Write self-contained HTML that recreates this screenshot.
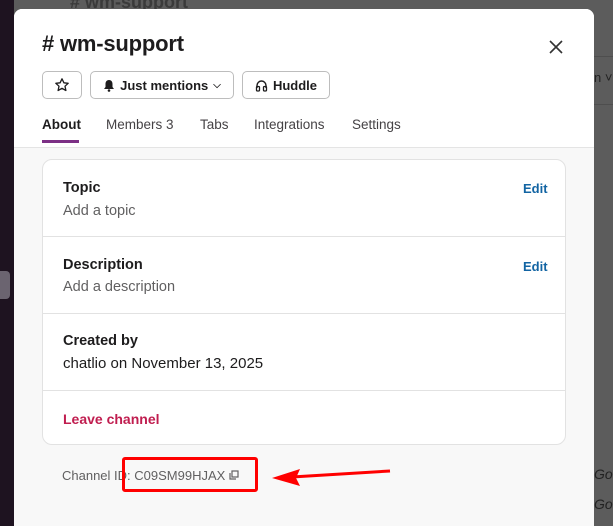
<!DOCTYPE html>
<html><head><style>
*{box-sizing:border-box;margin:0;padding:0}
html,body{width:613px;height:526px;overflow:hidden}
body{background:#5c5c5c;font-family:"Liberation Sans",sans-serif;position:relative;color:#1d1c1d}
.left{position:absolute;left:0;top:0;width:14px;height:526px;background:#1e1320}
.lb{position:absolute;left:0;top:271px;width:10px;height:28px;background:#6b6470;border-radius:0 4px 4px 0}
.modal{position:absolute;left:14px;top:9px;width:580px;height:517px;background:#f8f8f8;border-radius:8px 8px 0 0;overflow:hidden}
.head{background:#fff;height:139px;border-bottom:1px solid #e4e4e4}
h1{position:absolute;left:28px;top:22px;font-size:22px;font-weight:bold;letter-spacing:-0.2px}
.x{position:absolute;left:534px;top:30px}
.btn{position:absolute;top:62px;height:28px;border:1px solid #bdbdbd;border-radius:5px;background:#fff;font-size:13px;font-weight:bold;display:flex;align-items:center;justify-content:center;gap:5px}
.tabs{position:absolute;top:108px;font-size:13.5px;color:#454245}
.ul{position:absolute;left:28px;top:131px;width:37px;height:3px;background:#7c3085}
.card{position:absolute;left:28px;top:150px;width:524px;height:286px;background:#fff;border:1px solid #e2e2e2;border-radius:10px}
.row{position:absolute;left:0;width:522px;border-top:1px solid #e2e2e2}
.t{position:absolute;left:20px;font-size:14.5px;font-weight:bold}
.s{position:absolute;left:20px;font-size:14.5px;color:#616061}
.e{position:absolute;left:480px;font-size:13px;font-weight:bold;color:#1264a3}
</style></head><body>
<div class="left"><div class="lb"></div></div>
<div style="position:absolute;left:70px;top:-8px;font-size:18px;font-weight:bold;color:#3a3a3a"># wm-support</div>
<div style="position:absolute;left:594px;top:56px;width:19px;height:1px;background:#4e4e4e"></div>
<div style="position:absolute;left:594px;top:104px;width:19px;height:1px;background:#4e4e4e"></div>
<div style="position:absolute;left:594px;top:70px;font-size:13px;color:#222">n ˅</div>
<div style="position:absolute;left:594px;top:466px;font-size:14px;font-style:italic;color:#222">Go</div>
<div style="position:absolute;left:594px;top:496px;font-size:14px;font-style:italic;color:#222">Go</div>
<div class="modal">
<div class="head"></div>
<h1># wm-support</h1>
<svg class="x" width="16" height="16" viewBox="0 0 16 16"><path d="M2 2L14 14M14 2L2 14" stroke="#333" stroke-width="1.6"/></svg>
<div class="btn" style="left:28px;width:40px"><svg width="16" height="16" viewBox="0 0 16 16"><path d="M8 1.8l1.9 4 4.3.5-3.2 2.9.9 4.3L8 11.3l-3.9 2.2.9-4.3L1.8 6.3l4.3-.5z" fill="none" stroke="#1d1c1d" stroke-width="1.3" stroke-linejoin="round"/></svg></div>
<div class="btn" style="left:76px;width:144px"><svg width="12" height="13" viewBox="0 0 12 13"><path d="M6 1C3.5 1 2.5 3 2.5 5v3L1 10h10L9.5 8V5C9.5 3 8.5 1 6 1z" fill="#1d1c1d"/><circle cx="6" cy="11.5" r="1.3" fill="#1d1c1d"/></svg>Just mentions <span style="font-size:10px">⌵</span></div>
<div class="btn" style="left:228px;width:88px"><svg width="13" height="13" viewBox="0 0 13 13"><path d="M2 9V6.5a4.5 4.5 0 0 1 9 0V9" fill="none" stroke="#1d1c1d" stroke-width="1.4"/><rect x="1.5" y="7.5" width="3" height="4.5" rx="1" fill="none" stroke="#1d1c1d" stroke-width="1.3"/><rect x="8.5" y="7.5" width="3" height="4.5" rx="1" fill="none" stroke="#1d1c1d" stroke-width="1.3"/></svg>Huddle</div>
<div class="tabs" style="left:28px;color:#1d1c1d;font-weight:bold">About</div>
<div class="tabs" style="left:92px">Members 3</div>
<div class="tabs" style="left:186px">Tabs</div>
<div class="tabs" style="left:240px">Integrations</div>
<div class="tabs" style="left:338px">Settings</div>
<div class="ul"></div>
<div class="card">
<div class="t" style="top:20px">Topic</div><div class="s" style="top:43px">Add a topic</div><div class="e" style="top:21px">Edit</div>
<div class="row" style="top:76px"></div>
<div class="t" style="top:97px">Description</div><div class="s" style="top:119px">Add a description</div><div class="e" style="top:99px">Edit</div>
<div class="row" style="top:153px"></div>
<div class="t" style="top:173px">Created by</div><div style="position:absolute;left:20px;top:195px;font-size:15px">chatlio on November 13, 2025</div>
<div class="row" style="top:230px"></div>
<div class="t" style="top:251px;color:#c01d4f;font-size:14px">Leave channel</div>
</div>
<div style="position:absolute;left:48px;top:459px;font-size:13px;color:#616061">Channel ID: C09SM99HJAX <svg width="10" height="10" viewBox="0 0 10 10"><rect x="3" y="1" width="6" height="6" fill="none" stroke="#616061" stroke-width="1.2"/><path d="M1 3v6h6" fill="none" stroke="#616061" stroke-width="1.2"/></svg></div>
</div>
<div style="position:absolute;left:122px;top:457px;width:136px;height:35px;border:3px solid #f00;border-radius:3px"></div>
<svg style="position:absolute;left:270px;top:465px" width="125" height="24" viewBox="0 0 125 24"><path d="M120 6L22 12" stroke="#f00" stroke-width="3"/><path d="M2 13L30 4L26 13L30 21Z" fill="#f00"/></svg>
</body></html>
